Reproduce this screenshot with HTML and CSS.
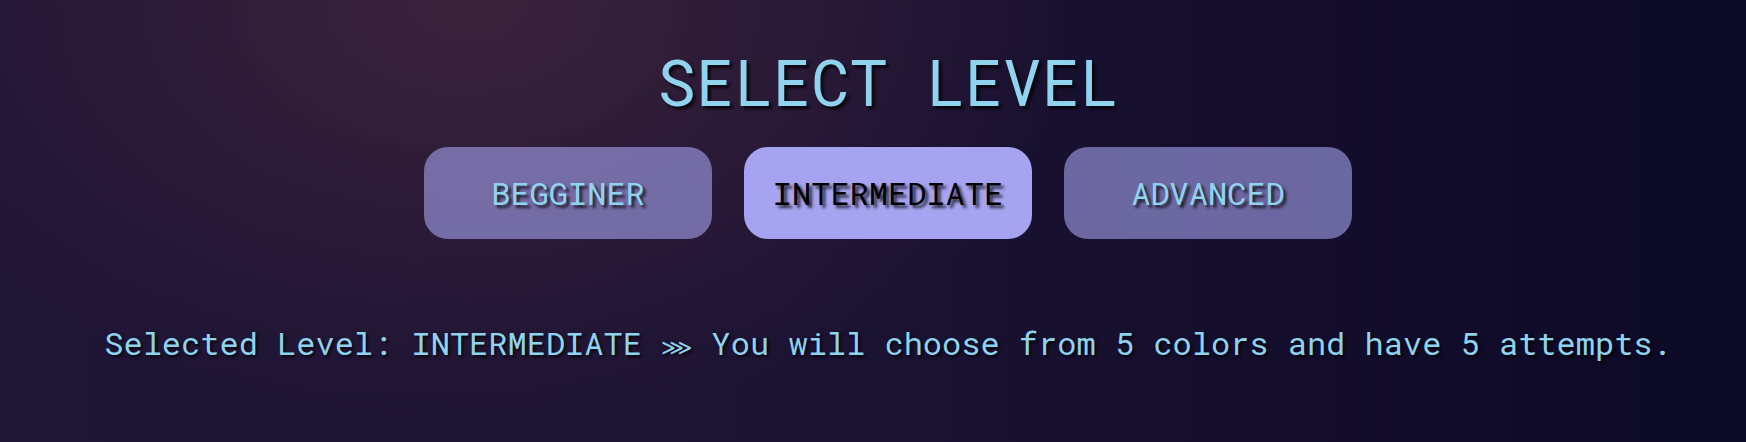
FILE: index.html
```html
<!DOCTYPE html>
<html lang="en">
<head>
<meta charset="utf-8">
<title>Select Level</title>
<link rel="stylesheet" href="styles.css">
</head>
<body>
<main class="screen">
  <h1 class="title">SELECT LEVEL</h1>
  <div class="levels">
    <button class="level">BEGGINER</button>
    <button class="level level--active">INTERMEDIATE</button>
    <button class="level">ADVANCED</button>
  </div>
  <p class="summary">Selected Level: INTERMEDIATE <span class="sep">⋙</span> You will choose from 5 colors and have 5 attempts.</p>
</main>
</body>
</html>
```
FILE: styles.css
```css
html, body {
  margin: 0;
  height: 100%;
}

body {
  font-family: "Roboto Mono", "DejaVu Sans Mono", "Liberation Mono", monospace;
  color: #8fd3ef;
  background:
    radial-gradient(ellipse 620px 420px at 470px 0px, rgba(66, 38, 60, 0.8), rgba(66, 38, 60, 0) 100%),
    linear-gradient(90deg, #1f1535 0%, #1c1333 45%, #0c0925 100%);
  overflow: hidden;
}

.screen {
  display: flex;
  flex-direction: column;
  align-items: center;
  padding-left: 30px;
  padding-top: 49px;
}

.title {
  margin: 0;
  font-size: 64px;
  font-weight: 400;
  line-height: 64px;
  color: #8fd3ef;
  text-shadow: 3px 3px 3px rgba(0, 0, 0, 0.75);
}

.levels {
  display: flex;
  gap: 32px;
  margin-top: 34px;
}

.level {
  width: 288px;
  height: 92px;
  border: none;
  border-radius: 24px;
  background: rgba(166, 163, 240, 0.6);
  font-family: inherit;
  font-size: 32px;
  line-height: 32px;
  color: #8fd3ef;
  text-shadow: 3px 3px 3px rgba(0, 0, 0, 0.75);
  padding: 0;
  cursor: pointer;
}

.level--active {
  background: #a6a3f0;
  color: #000;
}

.summary {
  margin: 88px 0 0;
  font-size: 32px;
  line-height: 32px;
  color: #8fd3ef;
  text-shadow: 2px 2px 3px rgba(0, 0, 0, 0.75);
  white-space: nowrap;
}

.sep {
  font-family: "DejaVu Sans", sans-serif;
  font-size: 22px;
}
```
